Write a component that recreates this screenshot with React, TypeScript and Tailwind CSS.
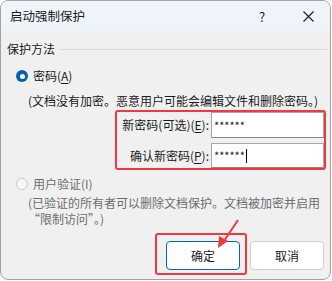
import { useState } from "react";

const font = { fontFamily: '"Noto Sans CJK SC", "Microsoft YaHei UI", sans-serif' };

const Radio = ({ checked, disabled }: { checked?: boolean; disabled?: boolean }) =>
  checked ? (
    <span className="w-3 h-3 rounded-full bg-[#005fb8] flex items-center justify-center shrink-0">
      <span className="w-[5px] h-[5px] rounded-full bg-white" />
    </span>
  ) : (
    <span
      className={`w-3 h-3 rounded-full border shrink-0 ${
        disabled ? "border-[#c8c8c8] bg-[#f7f7f7]" : "border-[#8a8a8a] bg-white"
      }`}
    />
  );

const App = () => {
  const [pw1] = useState("******");
  const [pw2] = useState("******");

  return (
    <div className="w-[332px] h-[281px] bg-white text-[12px] text-[#1b1b1b]" style={font}>
      <div className="relative w-[331px] h-[280px] rounded-[8px] border border-[#a3a3a3] bg-[#f0f0f0] overflow-hidden flex flex-col">
        {/* title bar */}
        <div className="h-[30px] bg-[#eef4f9] flex items-center pl-[9px] shrink-0">
          <span className="text-[12.5px] leading-none">启动强制保护</span>
          <span className="ml-auto w-[10px] text-center text-[13px] leading-none mr-[36px]">?</span>
          <svg width="11" height="11" viewBox="0 0 11 11" className="mr-[16px]">
            <path d="M0.5 0.5 L10.5 10.5 M10.5 0.5 L0.5 10.5" stroke="#1b1b1b" strokeWidth="1.1" />
          </svg>
        </div>

        {/* body */}
        <div className="flex flex-col pl-[6px] pr-[6px]">
          <div className="mt-[10px] h-4 flex items-center">
            <span className="leading-none">保护方法</span>
            <span className="flex-1 h-px bg-[#d8d8d8] ml-[5px] mr-[-3px]" />
          </div>

          <div className="mt-[11px] h-4 flex items-center pl-[9px] gap-[5px]">
            <Radio checked />
            <span className="leading-none">
              密码(<span className="underline underline-offset-2">A</span>)
            </span>
          </div>

          <div className="mt-[9px] h-4 flex items-center pl-[21px] whitespace-nowrap leading-none">
            (文档没有加密。恶意用户可能会编辑文件和删除密码。)
          </div>

          <div className="mt-[1px] ml-[108px] w-[211px] border-2 border-[#ee3a3f] rounded-[3px] flex flex-col gap-[5px] overflow-hidden">
            <div className="h-[26px] flex items-center">
              <span className="w-[94px] pr-[2px] text-right leading-none whitespace-nowrap">
                新密码(可选)(<span className="underline underline-offset-2">E</span>):
              </span>
              <div className="flex-1 h-full bg-white border border-[#a6a6a6] border-b-[#868686] flex items-center pl-[2px] text-[11px] leading-none">
                {pw1}
              </div>
            </div>
            <div className="h-[25px] flex items-center">
              <span className="w-[94px] pr-[2px] text-right leading-none whitespace-nowrap">
                确认新密码(<span className="underline underline-offset-2">P</span>):
              </span>
              <div className="flex-1 h-full bg-white border border-[#a6a6a6] border-b-[#868686] flex items-center pl-[2px] text-[11px] leading-none">
                {pw2}
                <span className="w-px h-[14px] bg-black ml-[1px]" />
              </div>
            </div>
          </div>

          <div className="mt-[6px] h-4 flex items-center pl-[9px] gap-[5px] text-[#6d6d6d]">
            <Radio disabled />
            <span className="leading-none">用户验证(I)</span>
          </div>

          <div className="mt-[3px] pl-[21px] text-[#6d6d6d] leading-[16px] whitespace-nowrap">
            (已验证的所有者可以删除文档保护。文档被加密并启用
            <br />
            “限制访问”。)
          </div>

          <div className="mt-[14px] flex justify-end gap-[10px]">
            <div className="relative">
              <button className="w-[74px] h-[29px] bg-white border-[1.5px] border-[#0067c0] rounded-[4px] leading-none">
                确定
              </button>
              <div className="absolute left-[-11px] right-[-7px] top-[-8px] bottom-[-5px] border-2 border-[#ee3a3f] rounded-[3px] pointer-events-none" />
            </div>
            <button className="w-[74px] h-[29px] bg-white border border-[#d0d0d0] rounded-[4px] leading-none">
              取消
            </button>
          </div>
        </div>

        {/* annotation arrow */}
        <svg className="absolute left-0 top-0 pointer-events-none" width="331" height="280">
          <line x1="237" y1="219" x2="223" y2="240" stroke="#ee3a3f" strokeWidth="2" />
          <polygon points="217,247 218,235 227,240" fill="#ee3a3f" />
        </svg>
      </div>
    </div>
  );
};

export default App;
